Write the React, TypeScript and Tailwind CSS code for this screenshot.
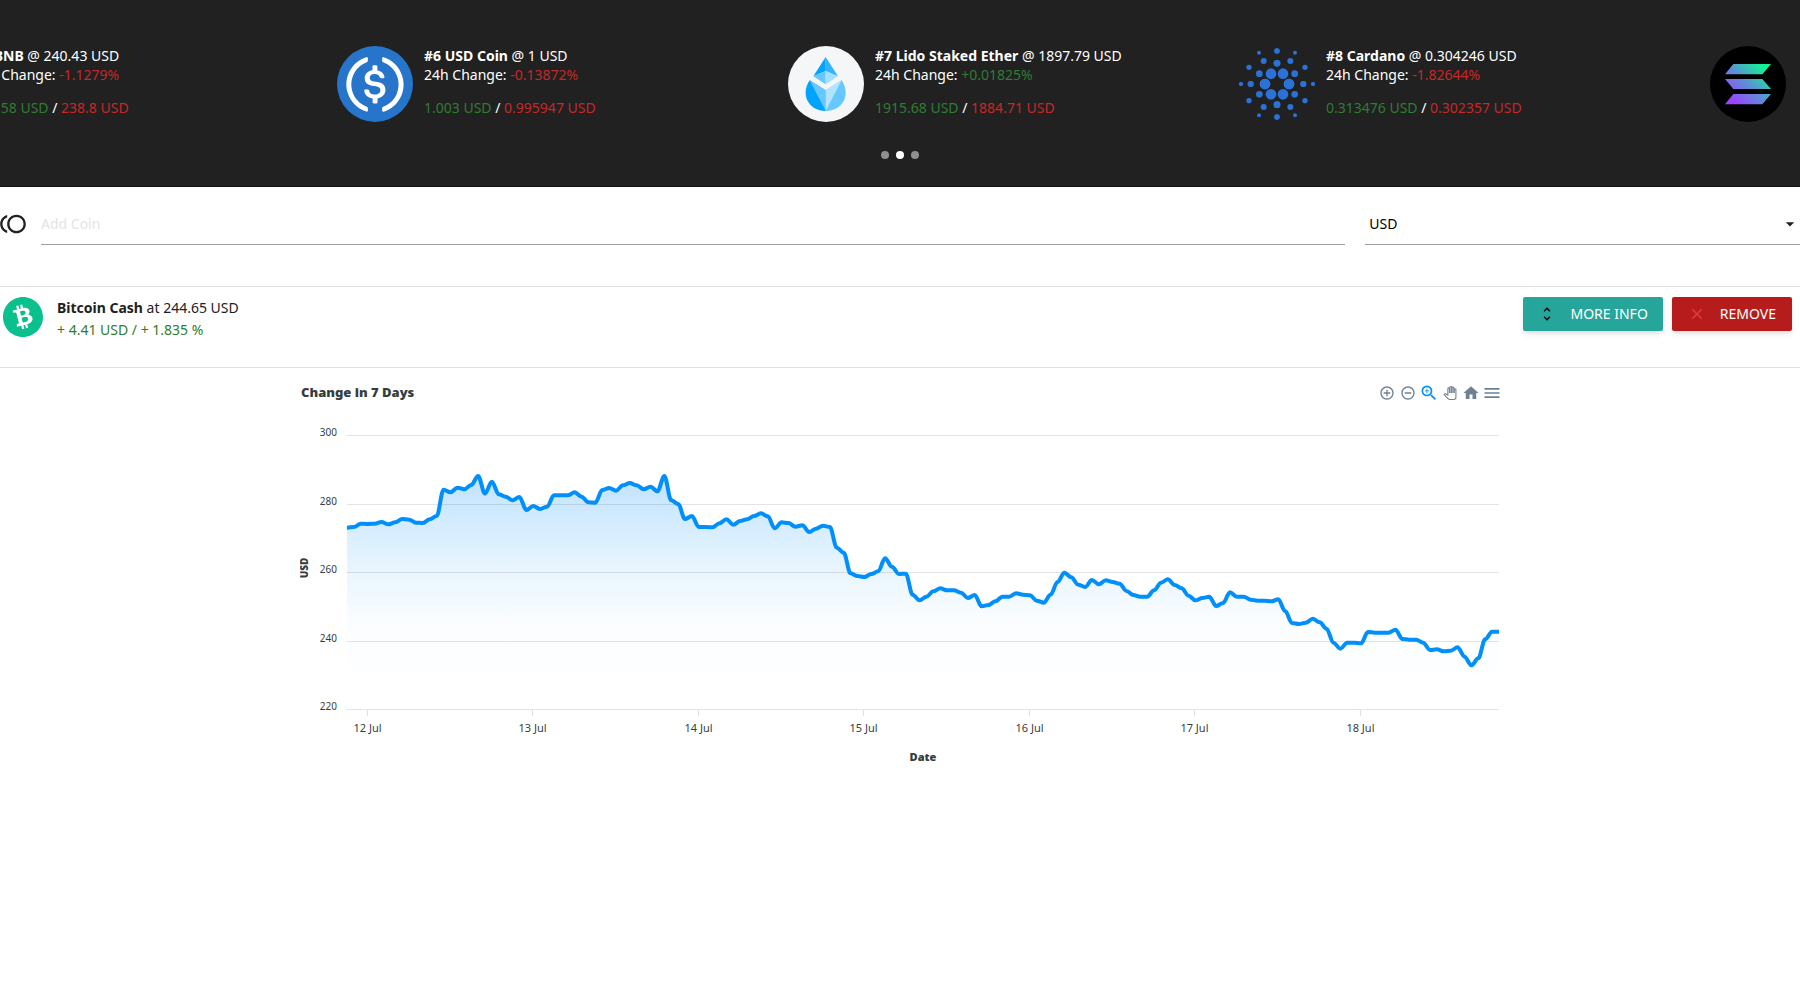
import React, { useState } from "react";
import {
  MdAddCircleOutline,
  MdArrowDropDown,
  MdClear,
  MdHome,
  MdMenu,
  MdRemoveCircleOutline,
  MdToll,
  MdUnfoldMore,
  MdZoomIn,
} from "react-icons/md";
import { SiBitcoincash } from "react-icons/si";

// ---------- coin logos ----------

function BnbLogo() {
  return (
    <svg viewBox="0 0 228 228" className="size-[76px] shrink-0">
      <circle cx="114" cy="114" r="114" fill="#f3ba2f" />
    </svg>
  );
}

function UsdcLogo() {
  return (
    <svg viewBox="0 0 2000 2000" className="size-[76px] shrink-0">
      <circle cx="1000" cy="1000" r="1000" fill="#2775ca" />
      <g fill="#fff">
        <path d="M1275 1158.33c0-145.83-87.5-195.83-262.5-216.66-125-16.67-150-50-150-108.34s41.67-95.83 125-95.83c75 0 116.67 25 137.5 87.5 4.17 12.5 16.67 20.83 29.17 20.83h66.66c16.67 0 29.17-12.5 29.17-29.16v-4.17c-16.67-91.67-91.67-162.5-187.5-170.83v-100c0-16.67-12.5-29.17-33.33-33.34h-62.5c-16.67 0-29.17 12.5-33.34 33.34v95.83c-125 16.67-204.16 100-204.16 204.17 0 137.5 83.33 191.66 258.33 212.5 116.67 20.83 154.17 45.83 154.17 112.5s-58.34 112.5-137.5 112.5c-108.34 0-145.84-45.84-158.34-108.34-4.16-16.66-16.66-25-29.16-25h-70.84c-16.66 0-29.16 12.5-29.16 29.17v4.17c16.66 104.16 83.33 179.16 220.83 200v100c0 16.66 12.5 29.16 33.33 33.33h62.5c16.67 0 29.17-12.5 33.34-33.33v-100c125-20.84 208.33-108.34 208.33-220.84z" />
        <path d="M787.5 1595.83c-325-116.66-491.67-479.16-370.83-800 62.5-175 200-308.33 370.83-370.83 16.67-8.33 25-20.83 25-41.67V325c0-16.67-8.33-29.17-25-33.33-4.17 0-12.5 0-16.67 4.16-395.83 125-612.5 545.84-487.5 941.67 75 233.33 254.17 412.5 487.5 487.5 16.67 8.33 33.34 0 37.5-16.67 4.17-4.16 4.17-8.33 4.17-16.66v-58.34c0-12.5-12.5-29.16-25-37.5zM1229.17 295.83c-16.67-8.33-33.34 0-37.5 16.67-4.17 4.17-4.17 8.33-4.17 16.67v58.33c0 16.67 12.5 33.33 25 41.67 325 116.66 491.67 479.16 370.83 800-62.5 175-200 308.33-370.83 370.83-16.67 8.33-25 20.83-25 41.67V1700c0 16.67 8.33 29.17 25 33.33 4.17 0 12.5 0 16.67-4.16 395.83-125 612.5-545.84 487.5-941.67-75-237.5-258.34-416.67-487.5-491.67z" />
      </g>
    </svg>
  );
}

function LidoLogo() {
  return (
    <svg viewBox="0 0 228 228" className="size-[76px] shrink-0">
      <circle cx="114" cy="114" r="114" fill="#f4f6f8" />
      <path d="M113 33L76 91l37-16z" fill="#00a3ff" />
      <path d="M113 33l37 58-37-16z" fill="#33b3ff" />
      <path d="M113 75L76 91l37 24z" fill="#66c8ff" />
      <path d="M113 75l37 16-37 24z" fill="#a5deff" />
      <path d="M65 103C36 146 62 195 113 195v-62z" fill="#00a3ff" />
      <path d="M161 103C190 146 164 195 113 195v-62z" fill="#66c8ff" />
      <path d="M65 103l48 30v62z" fill="#66c8ff" />
      <path d="M161 103l-48 30v62z" fill="#b2e3ff" />
    </svg>
  );
}

const cardanoDots = [
  [36, 0, 16], [18, 31, 16], [0, 62, 10], [53, 31, 10], [79, 0, 9],
  [40, 69, 9], [84, 50, 8], [0, 99, 8], [108, 0, 6], [54, 94, 6],
];

function CardanoLogo() {
  return (
    <svg viewBox="-114 -114 228 228" className="size-[76px] shrink-0" fill="#2a71d8">
      {cardanoDots.map(([x, y, r]) => (
        <g key={`${x}-${y}`}>
          <circle cx={x} cy={y} r={r} />
          <circle cx={-x} cy={y} r={r} />
          <circle cx={x} cy={-y} r={r} />
          <circle cx={-x} cy={-y} r={r} />
        </g>
      ))}
    </svg>
  );
}

function SolanaLogo() {
  return (
    <svg viewBox="0 0 228 228" className="size-[76px] shrink-0">
      <defs>
        <linearGradient id="solana" gradientUnits="userSpaceOnUse" x1="55" y1="174" x2="171" y2="54">
          <stop offset="0.1" stopColor="#9945ff" />
          <stop offset="0.5" stopColor="#5d8fd6" />
          <stop offset="0.9" stopColor="#14f195" />
        </linearGradient>
      </defs>
      <circle cx="114" cy="114" r="114" />
      <path d="M70 54h113l-26 31H45zM45 99h112l26 30H70zM70 144h113l-26 31H45z" fill="url(#solana)" />
    </svg>
  );
}

// ---------- carousel ----------

const coins = [
  { rank: 5, name: "BNB", price: "240.43", change: "-1.1279%", high: "244.58", low: "238.8", logo: <BnbLogo /> },
  { rank: 6, name: "USD Coin", price: "1", change: "-0.13872%", high: "1.003", low: "0.995947", logo: <UsdcLogo /> },
  { rank: 7, name: "Lido Staked Ether", price: "1897.79", change: "+0.01825%", high: "1915.68", low: "1884.71", logo: <LidoLogo /> },
  { rank: 8, name: "Cardano", price: "0.304246", change: "-1.82644%", high: "0.313476", low: "0.302357", logo: <CardanoLogo /> },
];

function Carousel() {
  const [page, setPage] = useState(1);

  return (
    <header className="overflow-hidden border-b border-[#111] bg-[#212121] pt-[46px] text-sm leading-[19px] text-white">
      <div className="-ml-[114px] flex">
        {coins.map((coin) => (
          <div key={coin.name} className="flex w-[451px] shrink-0 gap-[11px]">
            {coin.logo}
            <div className="whitespace-nowrap">
              <p>
                <b>#{coin.rank} {coin.name}</b> @ {coin.price} USD
              </p>
              <p>
                24h Change:{" "}
                <span className={coin.change.startsWith("-") ? "text-[#c62828]" : "text-[#2e7d32]"}>{coin.change}</span>
              </p>
              <p className="mt-3.5">
                <span className="text-[#2e7d32]">{coin.high} USD</span> /{" "}
                <span className="text-[#c62828]">{coin.low} USD</span>
              </p>
            </div>
          </div>
        ))}
        <div className="shrink-0 pl-5">
          <SolanaLogo />
        </div>
      </div>
      <div className="flex justify-center gap-[7px] pt-[29px] pb-[27px]">
        {[0, 1, 2].map((i) => (
          <button
            key={i}
            type="button"
            aria-label={`Slide ${i + 1}`}
            onClick={() => setPage(i)}
            className={i === page ? "size-2 rounded-full bg-white" : "size-2 rounded-full bg-[#909090]"}
          />
        ))}
      </div>
    </header>
  );
}

// ---------- search row ----------

function SearchBar() {
  return (
    <div className="flex items-center pt-4">
      <label htmlFor="coin" className="-ml-px w-[42px] shrink-0">
        <MdToll size={28} aria-label="Add Coin" />
      </label>
      <input
        id="coin"
        type="text"
        placeholder="Add Coin"
        className="h-[42px] min-w-0 flex-[3] border-b border-[#9e9e9e] text-sm outline-none placeholder:text-[#e4e4e4]"
      />
      <div className="relative ml-5 min-w-0 flex-1">
        <select
          aria-label="Currency"
          className="h-[42px] w-full appearance-none border-b border-[#9e9e9e] px-1 text-sm text-black outline-none"
        >
          <option>USD</option>
        </select>
        <MdArrowDropDown size={20} className="pointer-events-none absolute top-[11px] right-0" />
      </div>
    </div>
  );
}

// ---------- price chart ----------

// hourly samples, in thirds of a chart unit
const samples = [
  473, 471, 461, 462, 461, 456, 463, 457, 447, 449, 458, 459, 448, 438, 359, 367, 353, 358, 345, 318, 371,
  335, 373, 380, 391, 381, 420, 408, 417, 410, 376, 376, 376, 367, 380, 397, 398, 360, 354, 362, 346, 339,
  346, 358, 350, 364, 318, 391, 402, 447, 438, 471, 471, 472, 460, 448, 464, 453, 448, 438, 430, 439, 475,
  457, 459, 470, 466, 486, 476, 467, 471, 533, 548, 610, 618, 621, 612, 604, 565, 590, 612, 611, 674, 691,
  680, 664, 655, 661, 661, 668, 684, 675, 709, 705, 694, 680, 680, 670, 674, 676, 692, 698, 674, 636, 608,
  622, 644, 651, 630, 643, 631, 636, 641, 663, 675, 680, 680, 661, 638, 628, 645, 655, 677, 691, 684, 680,
  708, 699, 667, 680, 680, 689, 692, 692, 694, 688, 723, 759, 762, 758, 746, 757, 776, 818, 836, 818, 818,
  820, 786, 788, 788, 788, 779, 807, 809, 809, 818, 840, 838, 844, 842, 832, 860, 886, 865, 808, 785, 785,
];

const left = 47;
const right = 1199;
const bottom = 300;
const step = (right - left) / (samples.length - 1);

const line = samples
  .map((s, i) => {
    const x = left + i * step;
    const y = s / 3 - 40;
    if (i === 0) return `M${x} ${y}`;
    const prev = samples[i - 1] / 3 - 40;
    return `C${x - step * 0.65} ${prev} ${x - step * 0.35} ${y} ${x} ${y}`;
  })
  .join("");

const prices = [300, 280, 260, 240, 220];
const days = [12, 13, 14, 15, 16, 17, 18];

function PriceChart() {
  return (
    <svg viewBox="0 0 1200 370" className="w-full" role="img" aria-label="Change in 7 Days">
      <defs>
        <linearGradient id="area" x1="0" y1="0" x2="0" y2="1">
          <stop offset="0" stopColor="#008ffb" stopOpacity="0.25" />
          <stop offset="0.4" stopColor="#008ffb" stopOpacity="0.09" />
          <stop offset="0.62" stopColor="#008ffb" stopOpacity="0.02" />
          <stop offset="0.9" stopColor="#008ffb" stopOpacity="0" />
        </linearGradient>
      </defs>
      {prices.map((price, i) => {
        const y = Math.round(25 + i * 68.6) + 0.5;
        return (
          <g key={price}>
            <line x1={left} x2={right} y1={y} y2={y} stroke="#e3e3e3" />
            <text x="37" y={y + 1} textAnchor="end" fontSize="10" fill="#373d3f">{price}</text>
          </g>
        );
      })}
      {days.map((day, i) => {
        const x = Math.round(66.9 + i * 165.5) + 0.5;
        return (
          <g key={day}>
            <line x1={x} x2={x} y1={bottom} y2={bottom + 6} stroke="#e0e0e0" />
            <text x={x} y="322" textAnchor="middle" fontSize="11" fill="#373d3f">{day} Jul</text>
          </g>
        );
      })}
      <path d={`${line}V${bottom}H${left}Z`} fill="url(#area)" />
      <path d={line} fill="none" stroke="#008ffb" strokeWidth="4" />
      <text x="623" y="351" textAnchor="middle" fontSize="11" fontWeight="900" fill="#373d3f">Date</text>
      <text transform="translate(8 158) rotate(-90)" textAnchor="middle" fontSize="10" fontWeight="900" fill="#373d3f">USD</text>
    </svg>
  );
}

function PanIcon() {
  return (
    <svg viewBox="-1 -1 26 26" className="size-3.5" fill="#fff" stroke="currentColor" strokeWidth="2">
      <path d="M23 5.5V20c0 2.2-1.8 4-4 4h-7.3c-1.08 0-2.1-.43-2.85-1.19L1 14.83s1.26-1.23 1.3-1.25c.22-.19.49-.29.79-.29.22 0 .42.06.6.16.04.01 4.31 2.46 4.31 2.46V4c0-.83.67-1.5 1.5-1.5S11 3.17 11 4v7h1V1.5c0-.83.67-1.5 1.5-1.5S15 .67 15 1.5V11h1V2.5c0-.83.67-1.5 1.5-1.5s1.5.67 1.5 1.5V11h1V5.5c0-.83.67-1.5 1.5-1.5s1.5.67 1.5 1.5z" />
    </svg>
  );
}

const tools = [
  { label: "Zoom in", icon: <MdAddCircleOutline size={16} /> },
  { label: "Zoom out", icon: <MdRemoveCircleOutline size={16} /> },
  { label: "Selection zoom", icon: <MdZoomIn size={20} color="#008ffb" /> },
  { label: "Panning", icon: <PanIcon /> },
  { label: "Reset zoom", icon: <MdHome size={18} /> },
  { label: "Menu", icon: <MdMenu size={20} /> },
];

export default function App() {
  return (
    <div className="overflow-x-hidden bg-white font-['Noto_Sans',sans-serif] text-[#212121]">
      <Carousel />
      <main>
        <SearchBar />

        <section className="mt-[41px] flex h-[82px] items-start border-y border-[#e0e0e0] pt-2.5 pr-2 pl-[3px]">
          <SiBitcoincash size={40} color="#0ac18e" className="shrink-0" />
          <div className="ml-3.5 text-sm leading-[22px]">
            <p>
              <b>Bitcoin Cash</b> at 244.65 USD
            </p>
            <p className="text-[#2e7d32]">+ 4.41 USD / + 1.835 %</p>
          </div>
          <div className="ml-auto flex gap-[9px] text-sm text-white">
            <button
              type="button"
              className="flex h-[34px] items-center gap-3.5 rounded-xs bg-[#26a69a] px-[15px] shadow-md"
            >
              <MdUnfoldMore size={18} color="#000" />
              MORE INFO
            </button>
            <button
              type="button"
              className="flex h-[34px] items-center gap-3.5 rounded-xs bg-[#b71c1c] px-4 shadow-md"
            >
              <MdClear size={18} color="#e53935" />
              REMOVE
            </button>
          </div>
        </section>

        <section className="mx-auto w-2/3 pt-2.5">
          <div className="mb-0.5 flex h-[30px] items-center justify-between pl-px">
            <h2 className="text-[13px] font-black text-[#373d3f]">Change in 7 Days</h2>
            <div className="-mr-0.5 flex gap-px text-[#6e8192]">
              {tools.map((tool) => (
                <button
                  key={tool.label}
                  type="button"
                  aria-label={tool.label}
                  className="flex size-5 items-center justify-center"
                >
                  {tool.icon}
                </button>
              ))}
            </div>
          </div>
          <PriceChart />
        </section>
      </main>
    </div>
  );
}
